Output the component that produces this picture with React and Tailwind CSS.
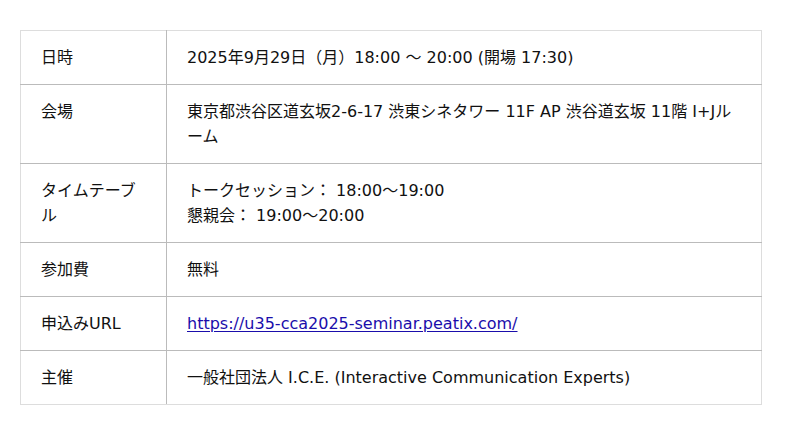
import React from 'react';

const rows = [
  { label: '日時', value: '2025年9月29日（月）18:00 〜 20:00 (開場 17:30)' },
  { label: '会場', value: '東京都渋谷区道玄坂2-6-17 渋東シネタワー 11F AP 渋谷道玄坂 11階 I+Jルーム' },
  {
    label: 'タイムテーブル',
    value: (
      <>
        トークセッション： 18:00〜19:00
        <br />
        懇親会： 19:00〜20:00
      </>
    ),
  },
  { label: '参加費', value: '無料' },
  {
    label: '申込みURL',
    value: (
      <a href="#" className="text-[#1a0dab] underline underline-offset-2">
        https://u35-cca2025-seminar.peatix.com/
      </a>
    ),
  },
  { label: '主催', value: '一般社団法人 I.C.E. (Interactive Communication Experts)' },
];

const App = () => {
  return (
    <div className="min-h-[435px] bg-white pt-[30px] pl-5 font-['DejaVu_Sans','Noto_Sans_CJK_JP',sans-serif] text-[16px] leading-[25px] text-[#111]">
      <table className="w-[742px] border-collapse">
        <tbody>
          {rows.map((row, i) => {
            const top = i === 0 ? 'border-t border-t-[#ddd]' : '';
            const bottom = i === rows.length - 1 ? 'border-b-[#ddd]' : 'border-b-[#bbb]';
            return (
              <tr key={i}>
                <td
                  className={`w-[146px] border-b border-l border-r border-l-[#ddd] border-r-[#bbb] ${bottom} ${top} px-5 py-[14px] align-top`}
                >
                  {row.label}
                </td>
                <td className={`border-b border-r border-r-[#ddd] ${bottom} ${top} px-5 py-[14px] align-top`}>
                  {row.value}
                </td>
              </tr>
            );
          })}
        </tbody>
      </table>
    </div>
  );
};

export default App;
